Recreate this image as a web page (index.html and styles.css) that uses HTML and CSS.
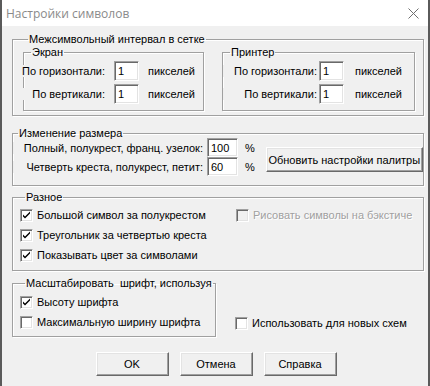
FILE: index.html
```html
<!DOCTYPE html>
<html lang="ru">
<head>
    <meta charset="UTF-8">
    <title>Настройки символов</title>
    <link rel="stylesheet" href="styles.css">
</head>
<body>
    <div class="window">
        <div class="titlebar">
            <span class="title">Настройки символов</span>
            <svg class="close" width="11" height="11" viewBox="0 0 11 11">
                <path d="M0.5 0.5 L10.5 10.5 M10.5 0.5 L0.5 10.5" stroke="#6f6f6f" stroke-width="1" fill="none"/>
            </svg>
        </div>

        <div class="content">
            <fieldset class="group spacing">
                <legend>Межсимвольный интервал в сетке</legend>
                <div class="pair">
                    <fieldset class="group sub screen">
                        <legend>Экран</legend>
                        <div class="row">
                            <span class="lbl">По горизонтали:</span>
                            <input class="field" type="text" value="1">
                            <span class="unit">пикселей</span>
                        </div>
                        <div class="row">
                            <span class="lbl">По вертикали:</span>
                            <input class="field" type="text" value="1">
                            <span class="unit">пикселей</span>
                        </div>
                    </fieldset>
                    <fieldset class="group sub printer">
                        <legend>Принтер</legend>
                        <div class="row">
                            <span class="lbl">По горизонтали:</span>
                            <input class="field" type="text" value="1">
                            <span class="unit">пикселей</span>
                        </div>
                        <div class="row">
                            <span class="lbl">По вертикали:</span>
                            <input class="field" type="text" value="1">
                            <span class="unit">пикселей</span>
                        </div>
                    </fieldset>
                </div>
            </fieldset>

            <fieldset class="group resize">
                <legend>Изменение размера</legend>
                <div class="resize-body">
                    <div class="resize-rows">
                        <div class="row">
                            <span class="lbl">Полный, полукрест, франц. узелок:</span>
                            <input class="field" type="text" value="100">
                            <span class="unit">%</span>
                        </div>
                        <div class="row">
                            <span class="lbl">Четверть креста, полукрест, петит:</span>
                            <input class="field" type="text" value="60">
                            <span class="unit">%</span>
                        </div>
                    </div>
                    <button class="btn wide">Обновить настройки палитры</button>
                </div>
            </fieldset>

            <fieldset class="group misc">
                <legend>Разное</legend>
                <div class="misc-body">
                    <div class="checks">
                        <label class="check"><span class="box on"><svg width="9" height="9" viewBox="0 0 9 9"><path d="M1 3.5 L3 5.5 L8 0.5 L8 2.5 L3 7.5 L1 5.5 Z" fill="#000"/></svg></span>Большой символ за полукрестом</label>
                        <label class="check"><span class="box on"><svg width="9" height="9" viewBox="0 0 9 9"><path d="M1 3.5 L3 5.5 L8 0.5 L8 2.5 L3 7.5 L1 5.5 Z" fill="#000"/></svg></span>Треугольник за четвертью креста</label>
                        <label class="check"><span class="box on"><svg width="9" height="9" viewBox="0 0 9 9"><path d="M1 3.5 L3 5.5 L8 0.5 L8 2.5 L3 7.5 L1 5.5 Z" fill="#000"/></svg></span>Показывать цвет за символами</label>
                    </div>
                    <label class="check disabled"><span class="box"></span>Рисовать символы на бэкстиче</label>
                </div>
            </fieldset>

            <div class="scale-line">
                <fieldset class="group scale">
                    <legend>Масштабировать&nbsp; шрифт, используя</legend>
                    <label class="check"><span class="box on"><svg width="9" height="9" viewBox="0 0 9 9"><path d="M1 3.5 L3 5.5 L8 0.5 L8 2.5 L3 7.5 L1 5.5 Z" fill="#000"/></svg></span>Высоту шрифта</label>
                    <label class="check"><span class="box"></span>Максимальную ширину шрифта</label>
                </fieldset>
                <label class="check new-schemes"><span class="box"></span>Использовать для новых схем</label>
            </div>

            <div class="actions">
                <button class="btn">OK</button>
                <button class="btn">Отмена</button>
                <button class="btn">Справка</button>
            </div>
        </div>
    </div>
</body>
</html>
```

FILE: styles.css
```css
body {
    margin: 0;
    background-color: #f0f0f0;
    font-family: 'Liberation Sans', Arial, sans-serif;
    font-size: 11px;
    color: #000;
}

.window {
    width: 430px;
    height: 386px;
    box-sizing: border-box;
    border-left: 2px solid #5a5a5a;
    border-right: 2px solid #5a5a5a;
    background-color: #f0f0f0;
    overflow: hidden;
}

.titlebar {
    height: 26px;
    background-color: #fff;
    display: flex;
    align-items: center;
    justify-content: space-between;
    padding: 0 9px 0 4px;
}

.title {
    font-family: 'Open Sans', 'Noto Sans', sans-serif;
    font-size: 12px;
    color: #8a8a8a;
}

.close {
    margin-top: 1px;
}

.content {
    padding: 8px 4px 0 10px;
}

/* etched group boxes */
.group {
    margin: 0;
    min-width: 0;
    border: 1px solid #a0a0a0;
    box-shadow: inset 1px 1px #fff, 1px 1px #fff;
    padding: 0;
}

.group legend {
    padding: 0 1px;
    margin-left: 5px;
    line-height: 10px;
    font-size: 11px;
}

.row {
    display: flex;
    align-items: center;
}

.lbl {
    display: flex;
    justify-content: flex-end;
    white-space: nowrap;
    background-color: #f0f0f0;
}

.field {
    box-sizing: border-box;
    margin: 0;
    background-color: #fff;
    border-style: solid;
    border-width: 1px;
    border-color: #a0a0a0 #fff #fff #a0a0a0;
    box-shadow: inset 1px 1px #696969, inset -1px -1px #e3e3e3;
    font-family: 'Liberation Sans', Arial, sans-serif;
    font-size: 11px;
    padding: 0 0 0 3px;
    outline: none;
}

/* spacing group */
.spacing {
    padding: 3px 0 4px 10px;
}

.pair {
    display: flex;
    gap: 18px;
}

.sub legend {
    margin-left: 7px;
}

.sub .row {
    height: 20px;
}

.sub .row + .row {
    margin-top: 3px;
}

.sub .field {
    height: 20px;
    width: 25px;
}

.screen {
    width: 181px;
    box-sizing: border-box;
    padding: 4px 0 6px 0;
}

.screen .lbl {
    width: 84px;
    margin-left: -3px;
    margin-right: 9px;
}

.screen .unit {
    margin-left: 9px;
}

.printer {
    width: 193px;
    box-sizing: border-box;
    padding: 4px 0 6px 0;
}

.printer .lbl {
    width: 94px;
    margin-right: 2px;
}

.printer .unit {
    margin-left: 11px;
}

/* resize group */
.resize {
    margin-top: 12px;
    padding: 0 0 9px 0;
}

.resize-body {
    display: flex;
    align-items: center;
}

.resize .row {
    height: 19px;
}

.resize .lbl {
    width: 190px;
    margin-right: 4px;
}

.resize .field {
    width: 31px;
    height: 19px;
}

.resize .unit {
    margin-left: 7px;
}

/* raised buttons */
.btn {
    box-sizing: border-box;
    height: 24px;
    width: 73px;
    margin: 0;
    padding: 0;
    background-color: #f0f0f0;
    border-style: solid;
    border-width: 1px;
    border-color: #fff #696969 #696969 #fff;
    box-shadow: inset -1px -1px #a0a0a0, inset 1px 1px #e3e3e3;
    font-family: 'Liberation Sans', Arial, sans-serif;
    font-size: 11px;
    color: #000;
}

.btn.wide {
    width: 157px;
    height: 25px;
    margin-left: 11px;
    margin-top: 5px;
}

/* checkboxes */
.check {
    display: flex;
    align-items: center;
    height: 20px;
    white-space: nowrap;
}

.box {
    box-sizing: border-box;
    width: 13px;
    height: 13px;
    margin-right: 4px;
    background-color: #fff;
    border-style: solid;
    border-width: 1px;
    border-color: #a0a0a0 #fff #fff #a0a0a0;
    box-shadow: inset 1px 1px #696969, inset -1px -1px #e3e3e3;
    display: flex;
    align-items: center;
    justify-content: center;
}

.disabled {
    color: #a0a0a0;
    text-shadow: 1px 1px #fff;
}

.disabled .box {
    background-color: #f0f0f0;
}

.misc {
    margin-top: 6px;
    padding: 3px 0 5px 7px;
}

.misc-body {
    display: flex;
    align-items: flex-start;
}

.checks {
    width: 216px;
}

.scale-line {
    display: flex;
    align-items: flex-end;
    margin-top: 7px;
}

.scale {
    width: 204px;
    box-sizing: border-box;
    padding: 4px 0 4px 7px;
}

.new-schemes {
    margin-left: 19px;
    margin-bottom: 4px;
}

.actions {
    display: flex;
    justify-content: center;
    gap: 11px;
    margin-top: 15px;
    padding-right: 4px;
}
```
